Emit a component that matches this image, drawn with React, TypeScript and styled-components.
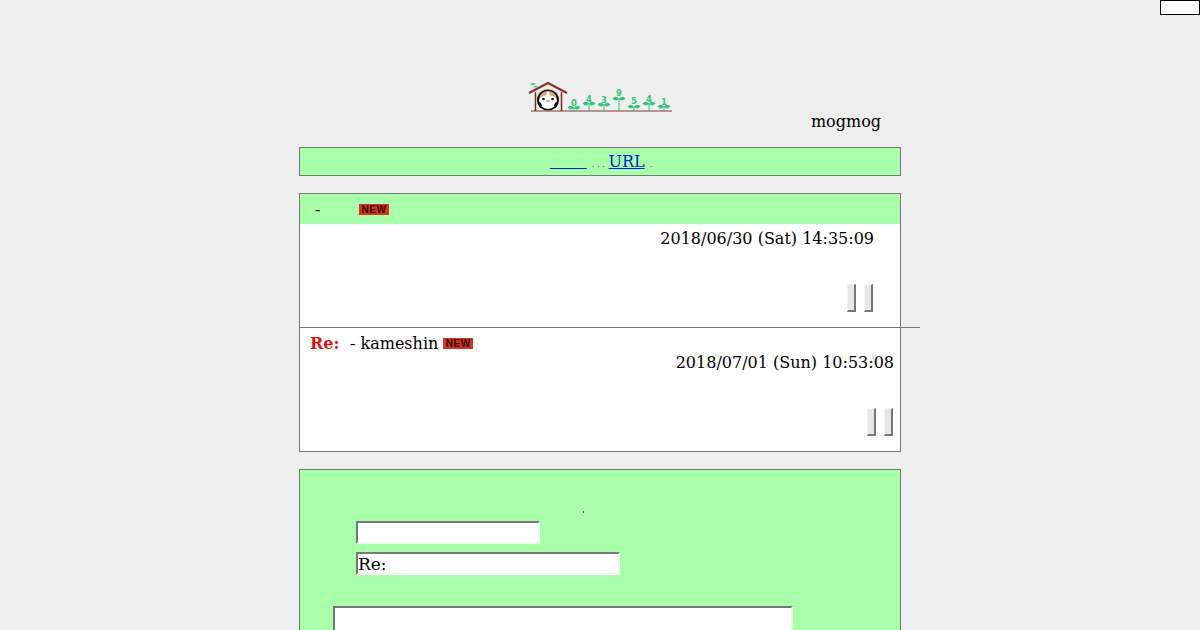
import React from 'react'
import styled, { createGlobalStyle } from 'styled-components'

const GlobalStyle = createGlobalStyle`
  html, body {
    margin: 0;
    padding: 0;
    height: 100%;
    overflow: hidden;
    background: #eeeeee;
  }
  body {
    font-family: 'DejaVu Serif', serif;
    font-size: 16px;
    color: #000;
  }
`

const NewBadge = () => <Badge>NEW</Badge>

const sprouts = [
  { x: 45, digit: '0', leaf: 25, label: 24 },
  { x: 60, digit: '4', leaf: 21, label: 20 },
  { x: 75, digit: '3', leaf: 22, label: 21 },
  { x: 90, digit: '9', leaf: 16, label: 14 },
  { x: 105, digit: '5', leaf: 24, label: 22 },
  { x: 120, digit: '4', leaf: 21, label: 20 },
  { x: 135, digit: '1', leaf: 24, label: 23 },
]

const Logo = () => (
  <svg width="144" height="32" viewBox="0 0 144 32">
    {/* sprout on the roof */}
    <path d="M1 2 Q4 0 7 2 Q4 4 1 2 Z M4 5 Q6 3 9 4 Q7 6 4 5 Z" fill="#35c47c" />
    {/* walls and roof */}
    <path d="M6.5 10 V29 M32.5 10 V29" stroke="#7a2a26" strokeWidth="1.5" />
    <path d="M19 3 L7 11 H32 Z" fill="#f2e6dc" />
    <path d="M0 11 L19 1 L38 11" fill="none" stroke="#84302b" strokeWidth="2" />
    {/* hamster */}
    <ellipse cx="19" cy="18" rx="11" ry="10.5" fill="#111" />
    <ellipse cx="19" cy="18.5" rx="9" ry="8.5" fill="#fff" />
    <path d="M10.5 16 Q12 9 19 9 Q26 9 27.5 16 Q23 13 19 13 Q15 13 10.5 16 Z" fill="#dca672" />
    <path d="M17.5 9.5 h3 v5 h-3 Z" fill="#fff" />
    <path d="M9 20 Q12 19 13 24 L11 26 Z M29 20 Q26 19 25 24 L27 26 Z" fill="#111" />
    <circle cx="14.5" cy="17" r="1.3" fill="#111" />
    <circle cx="23.5" cy="17" r="1.3" fill="#111" />
    <path d="M17.5 19 h3" stroke="#c8864f" strokeWidth="1.5" />
    {/* ground */}
    <path d="M2 29 H143" stroke="#7a3a30" strokeWidth="1" />
    {sprouts.map((s) => (
      <g key={s.x} fill="#35c47c">
        <path d={`M${s.x} ${s.leaf} V29`} stroke="#35c47c" strokeWidth="1" />
        <path
          d={`M${s.x} ${s.leaf + 1} Q${s.x - 3} ${s.leaf - 3} ${s.x - 6.5} ${s.leaf + 0.5} Q${s.x - 3} ${s.leaf + 4} ${s.x} ${s.leaf + 1} Q${s.x + 3} ${s.leaf - 3} ${s.x + 6.5} ${s.leaf + 0.5} Q${s.x + 3} ${s.leaf + 4} ${s.x} ${s.leaf + 1} Z`}
        />
        <text
          x={s.x}
          y={s.label}
          textAnchor="middle"
          fontFamily="'DejaVu Sans', sans-serif"
          fontSize="8.5"
          fontWeight="700"
        >
          {s.digit}
        </text>
      </g>
    ))}
  </svg>
)

const App = () => {
  return (
    <Page>
      <GlobalStyle />
      <CounterBox />
      <LogoRow>
        <Logo />
      </LogoRow>
      <OwnerName>mogmog</OwnerName>

      <MenuBox>
        <BlankLink href="#">&nbsp;&nbsp;&nbsp;&nbsp;&nbsp;&nbsp;&nbsp;</BlankLink>
        <TinyDots>. . .</TinyDots>
        <MenuLink href="#">URL</MenuLink>
        <TinyDots>.</TinyDots>
      </MenuBox>

      <ThreadBox>
        <ThreadHead>
          <Dash>-</Dash>
          <NewBadge />
        </ThreadHead>
        <PostBody>
          <DateLine>2018/06/30 (Sat) 14:35:09</DateLine>
          <ButtonRow>
            <EditButton type="button" />
            <EditButton type="button" />
          </ButtonRow>
        </PostBody>
        <Divider />
        <ReplyBody>
          <ReplyTitle>
            <ReMark>Re:</ReMark>
            <Author>- kameshin</Author>
            <NewBadge />
          </ReplyTitle>
          <DateLine>2018/07/01 (Sun) 10:53:08</DateLine>
          <ButtonRow>
            <EditButton type="button" />
            <EditButton type="button" />
          </ButtonRow>
        </ReplyBody>
      </ThreadBox>

      <FormBox>
        <FormDot>
          <DotMark />
        </FormDot>
        <Field $width={184} />
        <Field $width={264} defaultValue="Re:" />
        <MessageArea />
      </FormBox>
    </Page>
  )
}

export default App

const Page = styled.div`
  width: 602px;
  margin: 0 auto;
  padding-top: 82px;
`

// sits over the page corner, hit counter frame
const CounterBox = styled.div`
  position: absolute;
  top: 0;
  right: 0;
  width: 40px;
  height: 15px;
  box-sizing: border-box;
  background: #fff;
  border: 1px solid #000;
`

const LogoRow = styled.div`
  height: 29px;
  display: flex;
  justify-content: center;
  padding-left: 2px;

  svg {
    display: block;
    overflow: visible;
  }
`

const OwnerName = styled.div`
  text-align: right;
  padding: 1px 20px 0 0;
  line-height: 20px;
  height: 35px;
`

const MenuBox = styled.div`
  height: 29px;
  box-sizing: border-box;
  border: 1px solid #777;
  background: #aaffaa;
  display: flex;
  align-items: center;
  justify-content: center;
  line-height: 20px;
  padding-left: 6px;
`

const MenuLink = styled.a`
  color: #0022cc;
  text-decoration: underline;
`

const BlankLink = styled(MenuLink)`
  letter-spacing: 0.2px;
`

const TinyDots = styled.span`
  font-size: 8px;
  color: #002233;
  margin: 7px 4px 0 5px;
`

const ThreadBox = styled.div`
  margin-top: 17px;
  height: 259px;
  box-sizing: border-box;
  border: 1px solid #777;
  background: #fff;
`

const ThreadHead = styled.div`
  height: 30px;
  background: #aaffaa;
  display: flex;
  align-items: center;
  padding-left: 15px;
`

const Dash = styled.span`
  width: 44px;
`

const Badge = styled.span`
  display: inline-block;
  width: 30px;
  height: 11px;
  line-height: 11px;
  text-align: center;
  background: #d8341c;
  color: #2a0606;
  font-family: 'Liberation Sans', sans-serif;
  font-size: 10px;
  font-weight: 700;
  letter-spacing: 0.6px;
`

const PostBody = styled.div`
  height: 103px;
  box-sizing: border-box;
  padding: 5px 26px 0 0;
`

const DateLine = styled.div`
  text-align: right;
  line-height: 20px;
`

const ButtonRow = styled.div`
  display: flex;
  justify-content: flex-end;
  gap: 8px;
  margin-top: 35px;
  margin-right: 1px;
`

const EditButton = styled.button`
  width: 9px;
  height: 28px;
  padding: 0;
  box-sizing: border-box;
  background: #e9e7e3;
  border-style: solid;
  border-width: 1px 2px 2px 1px;
  border-color: #f4f4f4 #777 #777 #f4f4f4;
`

// wider than the box on the right, as in the page
const Divider = styled.div`
  width: 620px;
  height: 1px;
  background: #777;
`

const ReplyBody = styled.div`
  padding: 5px 6px 0 10px;
`

const ReplyTitle = styled.div`
  display: flex;
  align-items: center;
  height: 20px;
`

const ReMark = styled.span`
  color: #dd1111;
  font-weight: 700;
  width: 40px;
`

const Author = styled.span`
  margin-right: 5px;
`

const FormBox = styled.div`
  margin-top: 17px;
  box-sizing: border-box;
  border: 1px solid #777;
  background: #aaffaa;
  padding: 41px 0 30px;
`

const FormDot = styled.div`
  height: 10px;
  padding-left: 283px;
`

const DotMark = styled.span`
  display: block;
  width: 1px;
  height: 2px;
  background: #2244aa;
`

const Field = styled.input<{ $width: number }>`
  display: block;
  width: ${(p) => p.$width}px;
  height: 23px;
  box-sizing: border-box;
  margin: 0 0 8px 56px;
  padding: 0;
  border: 2px solid;
  border-color: #777 #f4f4f4 #f4f4f4 #777;
  background: #fff;
  font-family: 'DejaVu Serif', serif;
  font-size: 17px;
  color: #000;
  outline: none;
`

const MessageArea = styled.textarea`
  display: block;
  width: 460px;
  height: 100px;
  box-sizing: border-box;
  margin: 31px 0 0 33px;
  border: 2px solid;
  border-color: #777 #f4f4f4 #f4f4f4 #777;
  background: #fff;
  resize: none;
`
